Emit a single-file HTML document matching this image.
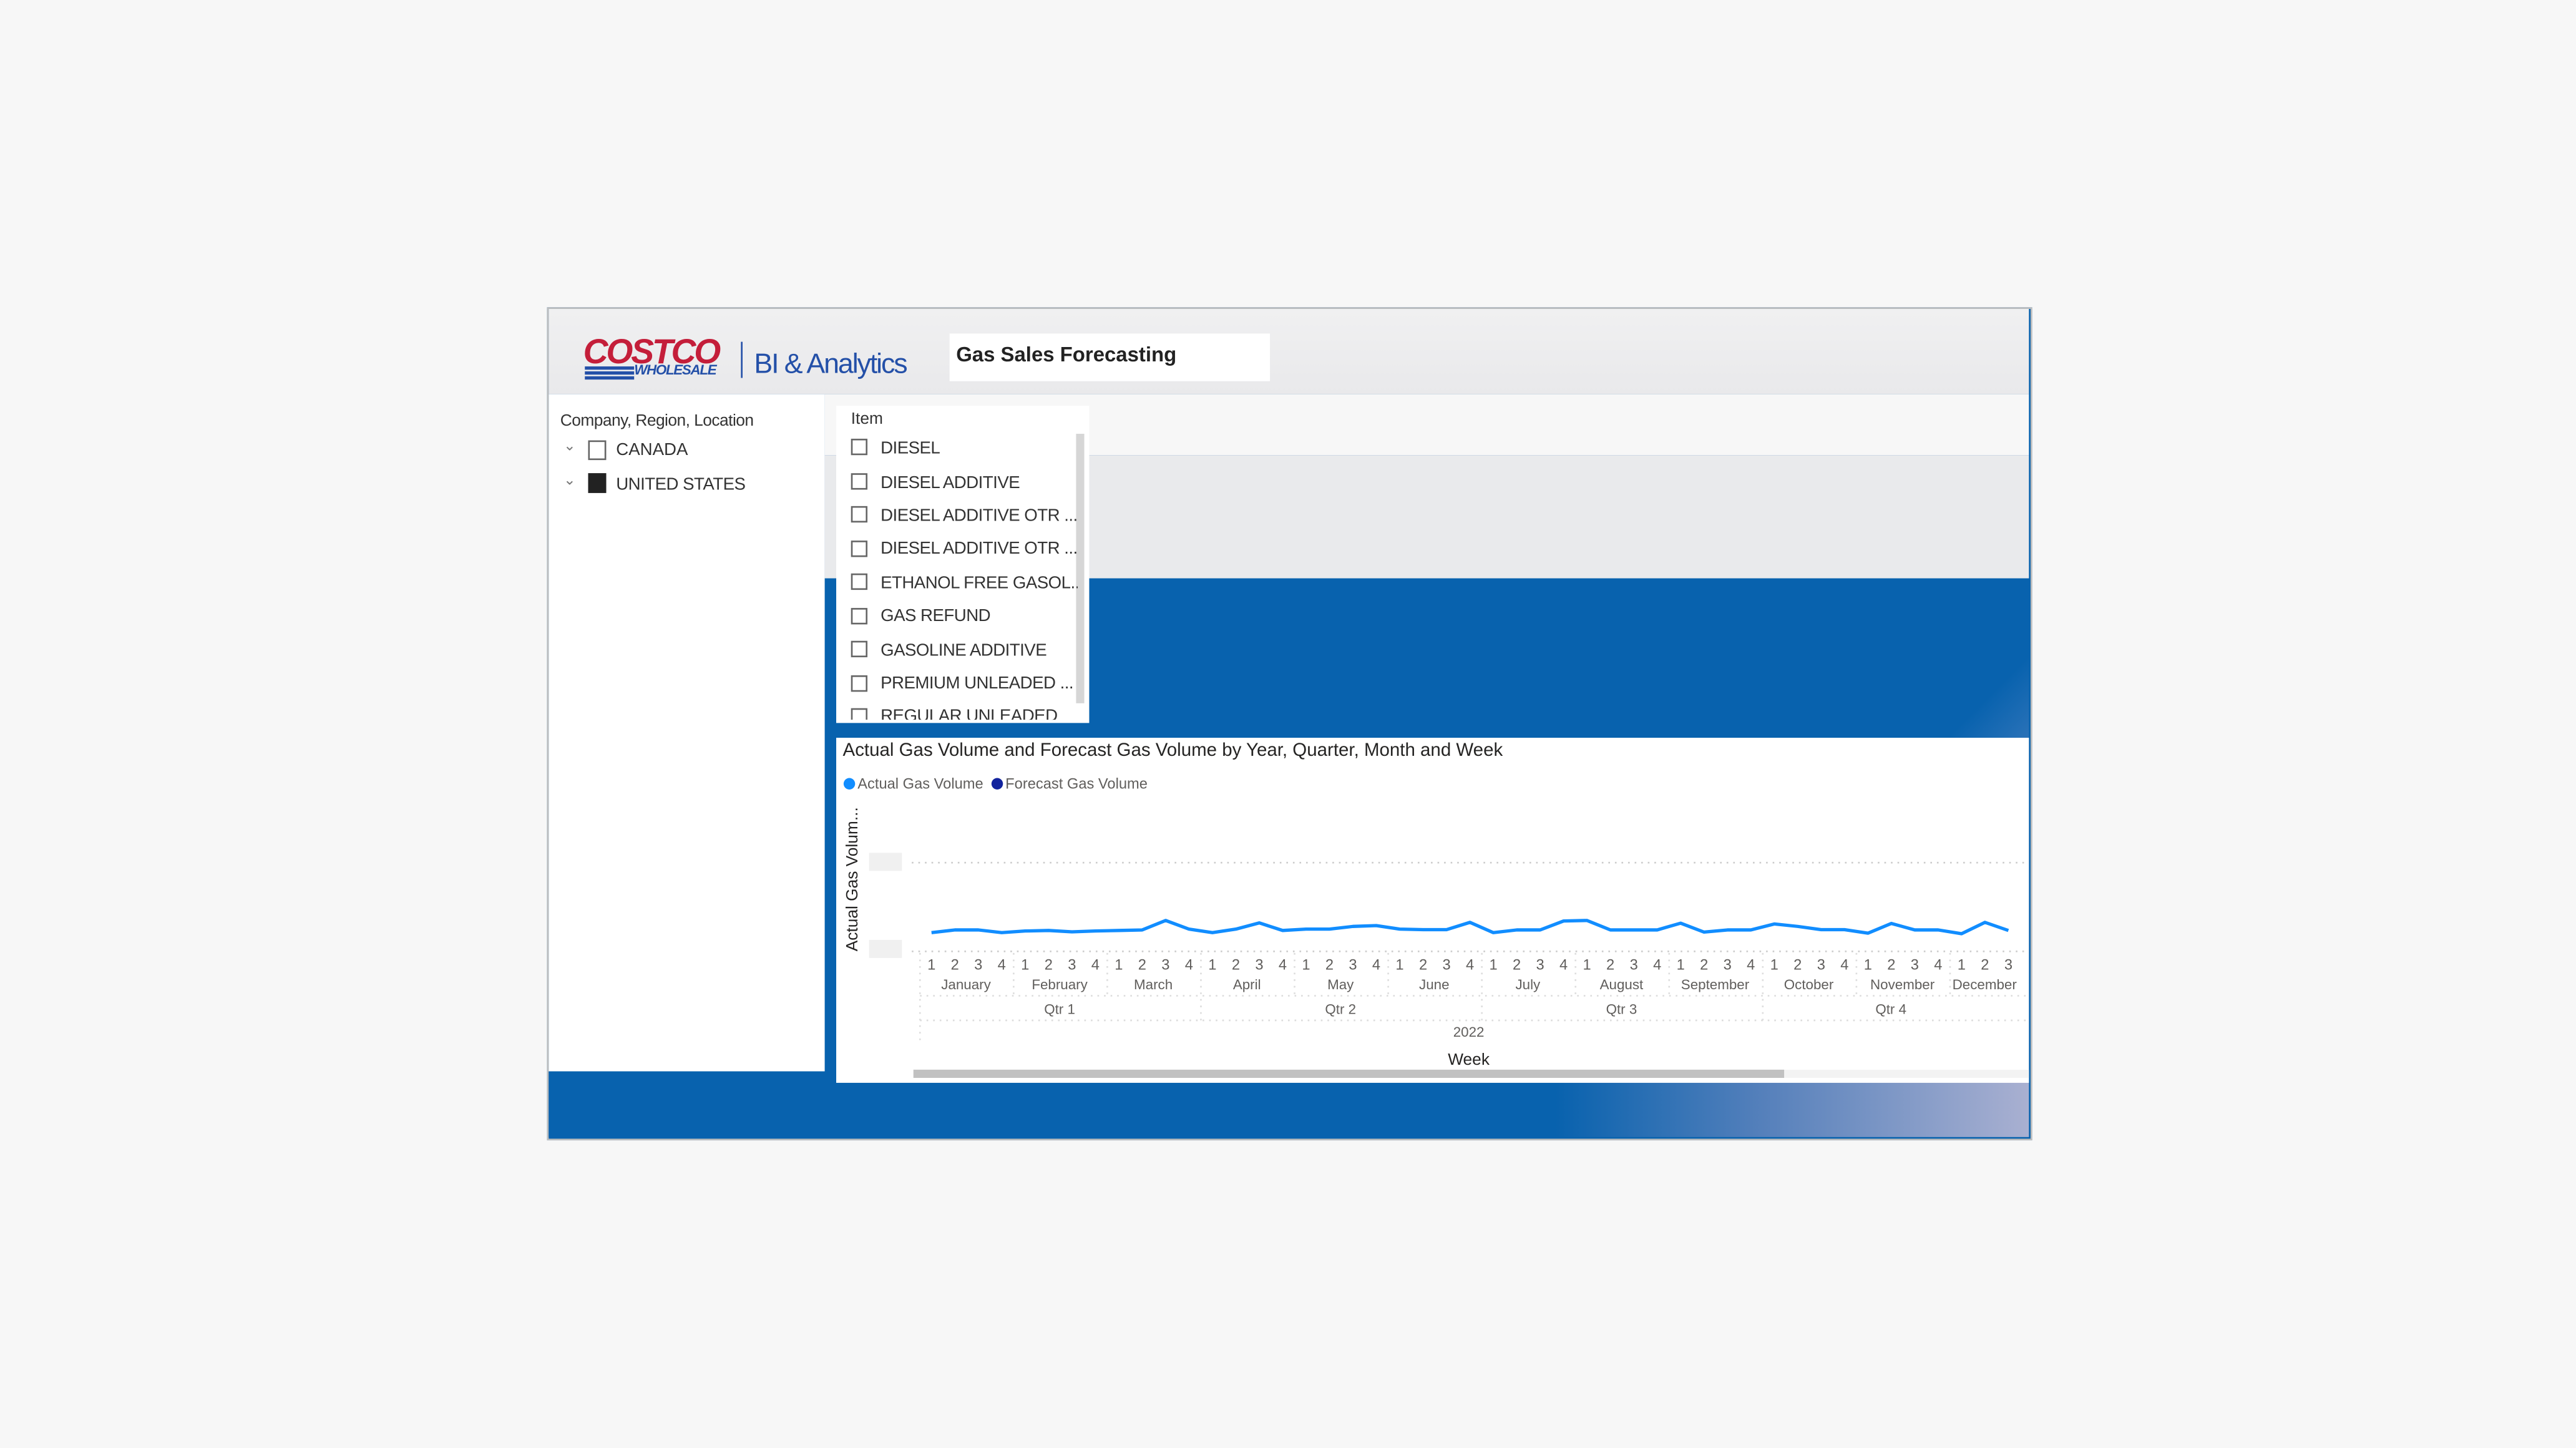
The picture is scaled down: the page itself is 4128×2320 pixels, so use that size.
<!DOCTYPE html>
<html><head><meta charset="utf-8"><style>
html,body{margin:0;padding:0;}
body{width:4128px;height:2320px;background:#f7f7f7;overflow:hidden;font-family:"Liberation Sans",sans-serif;}
#s{position:absolute;left:0;top:0;width:1568px;height:881px;transform:scale(2.63265);transform-origin:0 0;}
.a{position:absolute;}
.cb{position:absolute;width:10px;height:10px;border:1px solid #666;background:#fff;box-sizing:border-box;}
.it{position:absolute;left:536px;font-size:10.5px;color:#333;white-space:nowrap;letter-spacing:-0.2px;}
</style></head><body><div id="s">
<div class="a" style="left:333px;top:187px;width:902px;height:505px;border:1px solid #bdbdbd;background:#0862ae;"></div>
<!-- header -->
<div class="a" style="left:334px;top:188px;width:901px;height:52px;background:linear-gradient(#f0f0f1,#e9e9eb);"></div>
<div class="a" style="left:355px;top:203px;font-family:'Liberation Sans',sans-serif;font-weight:bold;font-style:italic;font-size:21px;color:#c41e3a;letter-spacing:-1.2px;">COSTCO</div>
<div class="a" style="left:356px;top:223px;width:30px;height:2px;background:#2450a8;box-shadow:0 3px 0 #2450a8,0 6px 0 #2450a8;"></div>
<div class="a" style="left:386px;top:220px;font-weight:bold;font-style:italic;font-size:8.5px;color:#2450a8;letter-spacing:-0.5px;">WHOLESALE</div>
<div class="a" style="left:451px;top:208px;width:1px;height:22px;background:#2450a8;"></div>
<div class="a" style="left:459px;top:212px;font-size:17px;color:#2450a8;letter-spacing:-0.8px;">BI &amp; Analytics</div>
<div class="a" style="left:578px;top:203px;width:195px;height:29px;background:#fff;"></div>
<div class="a" style="left:582px;top:209px;font-size:12.5px;font-weight:bold;color:#222;">Gas Sales Forecasting</div>
<!-- bands -->
<div class="a" style="left:502px;top:240px;width:733px;height:37px;background:#f7f7f7;"></div>
<div class="a" style="left:502px;top:277px;width:733px;height:75px;background:#e9eaec;"></div>
<div class="a" style="left:502px;top:352px;width:733px;height:97px;background:linear-gradient(135deg,#0862ae 94%,#2a72b8 100%);"></div>
<div class="a" style="left:334px;top:652px;width:901px;height:40px;background:linear-gradient(90deg,#0862ae 68%,#5580bb 82%,#a9b0d1 100%);"></div>
<!-- left slicer -->
<div class="a" style="left:334px;top:240px;width:168px;height:412px;background:#fff;"></div>
<div class="a" style="left:341px;top:251px;font-size:10px;color:#333;letter-spacing:-0.2px;">Company, Region, Location</div>
<div class="a" style="left:343px;top:266px;font-size:9px;color:#777;">&#8964;</div>
<div class="cb" style="left:358px;top:268px;width:11px;height:12px;"></div>
<div class="a" style="left:375px;top:268px;font-size:10.5px;color:#333;">CANADA</div>
<div class="a" style="left:343px;top:287px;font-size:9px;color:#777;">&#8964;</div>
<div class="cb" style="left:358px;top:288px;width:11px;height:12px;background:#222;border-color:#222;"></div>
<div class="a" style="left:375px;top:289px;font-size:10.5px;color:#333;letter-spacing:-0.2px;">UNITED STATES</div>
<!-- item slicer -->
<div class="a" style="left:509px;top:247px;width:154px;height:193px;background:#fff;overflow:hidden;">
<div class="a" style="left:146px;top:17px;width:5px;height:164px;background:#d6d6d6;"></div>
</div>
<div class="a" style="left:518px;top:250px;font-size:10px;color:#333;">Item</div>
<div class="a" style="left:509px;top:262px;width:147px;height:176px;overflow:hidden;">
<div style="position:relative;left:-509px;top:-262px;">
<div class="cb" style="left:518px;top:267px;"></div><div class="it" style="top:267px;">DIESEL</div>
<div class="cb" style="left:518px;top:288px;"></div><div class="it" style="top:288px;">DIESEL ADDITIVE</div>
<div class="cb" style="left:518px;top:308px;"></div><div class="it" style="top:308px;">DIESEL ADDITIVE OTR ...</div>
<div class="cb" style="left:518px;top:329px;"></div><div class="it" style="top:328px;">DIESEL ADDITIVE OTR ...</div>
<div class="cb" style="left:518px;top:349px;"></div><div class="it" style="top:349px;">ETHANOL FREE GASOL...</div>
<div class="cb" style="left:518px;top:370px;"></div><div class="it" style="top:369px;">GAS REFUND</div>
<div class="cb" style="left:518px;top:390px;"></div><div class="it" style="top:390px;">GASOLINE ADDITIVE</div>
<div class="cb" style="left:518px;top:411px;"></div><div class="it" style="top:410px;">PREMIUM UNLEADED ...</div>
<div class="cb" style="left:518px;top:431px;"></div><div class="it" style="top:430px;">REGULAR UNLEADED</div>
</div></div>
<!-- chart -->
<div class="a" style="left:509px;top:449px;width:726px;height:210px;background:#fff;"></div>
<svg class="a" style="left:0;top:0;" width="1568" height="881" viewBox="0 0 1568 881" font-family="Liberation Sans, sans-serif">
<text x="513" y="460" font-size="11.2" fill="#252423">Actual Gas Volume and Forecast Gas Volume by Year, Quarter, Month and Week</text>
<circle cx="517" cy="477" r="3.5" fill="#118dff"/><text x="522" y="480" font-size="9" fill="#605e5c">Actual Gas Volume</text>
<circle cx="607" cy="477" r="3.5" fill="#12239e"/><text x="612" y="480" font-size="9" fill="#605e5c">Forecast Gas Volume</text>
<text transform="translate(522,579) rotate(-90)" font-size="10" fill="#252423">Actual Gas Volum...</text>
<rect x="529" y="519" width="20" height="11" fill="#f0f0f0"/><rect x="529" y="572" width="20" height="11" fill="#f0f0f0"/>
<line x1="555" y1="525" x2="1235" y2="525" stroke="#ccc" stroke-dasharray="1 3"/>
<line x1="555" y1="579" x2="1235" y2="579" stroke="#ccc" stroke-dasharray="1 3"/>
<g stroke="#ddd" stroke-dasharray="1 3">
<line x1="560" y1="580" x2="560" y2="636"/>
<line x1="617" y1="580" x2="617" y2="606"/><line x1="674" y1="580" x2="674" y2="606"/><line x1="731" y1="580" x2="731" y2="621"/>
<line x1="788" y1="580" x2="788" y2="606"/><line x1="845" y1="580" x2="845" y2="606"/><line x1="902" y1="580" x2="902" y2="621"/>
<line x1="959" y1="580" x2="959" y2="606"/><line x1="1016" y1="580" x2="1016" y2="606"/><line x1="1073" y1="580" x2="1073" y2="621"/>
<line x1="1130" y1="580" x2="1130" y2="606"/><line x1="1187" y1="580" x2="1187" y2="606"/>
<line x1="560" y1="606" x2="1235" y2="606"/><line x1="560" y1="621" x2="1235" y2="621"/>
</g>
<polyline fill="none" stroke="#118dff" stroke-width="2" stroke-linejoin="round" transform="translate(0,444.4) scale(1,0.1647)" vector-effect="non-scaling-stroke" points="567,748 581.25,738 595.5,738 609.75,748 624,742 638.25,740 652.5,745 666.75,742 681,740 695.25,738 709.5,703 723.75,735 738,748 752.25,735 766.5,712 780.75,740 795,735 809.25,735 823.5,725 837.75,722 852,735 866.25,737 880.5,737 894.75,710 909,748 923.25,738 937.5,738 951.75,705 966,703 980.25,738 994.5,738 1008.75,738 1023,713 1037.25,746 1051.5,738 1065.75,738 1080,716 1094.25,725 1108.5,737 1122.75,737 1137,750 1151.25,714 1165.5,738 1179.75,738 1194,752 1208.25,710 1222.5,740"/>
<g font-size="9" fill="#605e5c" text-anchor="middle">
<text x="567" y="590">1</text><text x="581.25" y="590">2</text><text x="595.5" y="590">3</text><text x="609.75" y="590">4</text><text x="624" y="590">1</text><text x="638.25" y="590">2</text><text x="652.5" y="590">3</text><text x="666.75" y="590">4</text><text x="681" y="590">1</text><text x="695.25" y="590">2</text><text x="709.5" y="590">3</text><text x="723.75" y="590">4</text><text x="738" y="590">1</text><text x="752.25" y="590">2</text><text x="766.5" y="590">3</text><text x="780.75" y="590">4</text><text x="795" y="590">1</text><text x="809.25" y="590">2</text><text x="823.5" y="590">3</text><text x="837.75" y="590">4</text><text x="852" y="590">1</text><text x="866.25" y="590">2</text><text x="880.5" y="590">3</text><text x="894.75" y="590">4</text><text x="909" y="590">1</text><text x="923.25" y="590">2</text><text x="937.5" y="590">3</text><text x="951.75" y="590">4</text><text x="966" y="590">1</text><text x="980.25" y="590">2</text><text x="994.5" y="590">3</text><text x="1008.75" y="590">4</text><text x="1023" y="590">1</text><text x="1037.25" y="590">2</text><text x="1051.5" y="590">3</text><text x="1065.75" y="590">4</text><text x="1080" y="590">1</text><text x="1094.25" y="590">2</text><text x="1108.5" y="590">3</text><text x="1122.75" y="590">4</text><text x="1137" y="590">1</text><text x="1151.25" y="590">2</text><text x="1165.5" y="590">3</text><text x="1179.75" y="590">4</text><text x="1194" y="590">1</text><text x="1208.25" y="590">2</text><text x="1222.5" y="590">3</text>
</g>
<g font-size="8.5" fill="#605e5c" text-anchor="middle">
<text x="588" y="602">January</text><text x="645" y="602">February</text><text x="702" y="602">March</text><text x="759" y="602">April</text><text x="816" y="602">May</text><text x="873" y="602">June</text><text x="930" y="602">July</text><text x="987" y="602">August</text><text x="1044" y="602">September</text><text x="1101" y="602">October</text><text x="1158" y="602">November</text><text x="1208" y="602">December</text>
<text x="645" y="617">Qtr 1</text><text x="816" y="617">Qtr 2</text><text x="987" y="617">Qtr 3</text><text x="1151" y="617">Qtr 4</text>
<text x="894" y="631">2022</text>
</g>
<text x="894" y="648" font-size="10" fill="#252423" text-anchor="middle">Week</text>
<rect x="556" y="651" width="679" height="5" fill="#f3f3f3"/>
<rect x="556" y="651" width="530" height="5" fill="#c1c1c1"/>
</svg>
</div></body></html>
